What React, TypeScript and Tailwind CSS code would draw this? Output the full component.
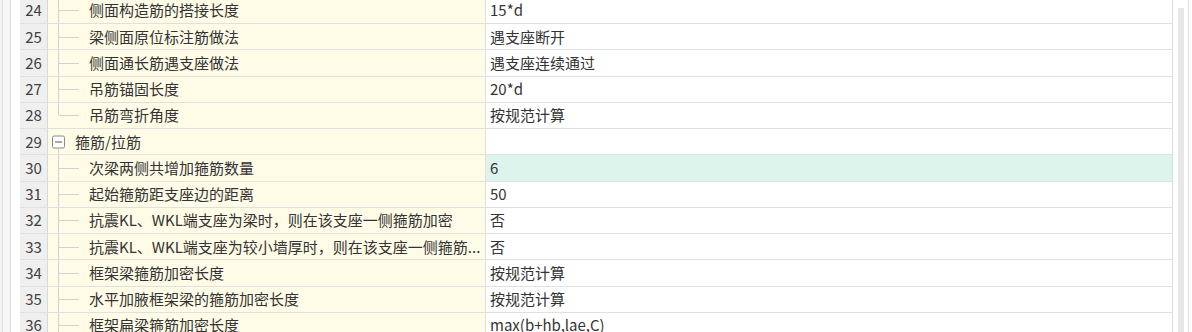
import React from 'react'

type Row = { no: number; name: string; value: string; group?: boolean; last?: boolean; active?: boolean }

const ROWS: Row[] = [
  { no: 24, name: '侧面构造筋的搭接长度', value: '15*d' },
  { no: 25, name: '梁侧面原位标注筋做法', value: '遇支座断开' },
  { no: 26, name: '侧面通长筋遇支座做法', value: '遇支座连续通过' },
  { no: 27, name: '吊筋锚固长度', value: '20*d' },
  { no: 28, name: '吊筋弯折角度', value: '按规范计算', last: true },
  { no: 29, name: '箍筋/拉筋', value: '', group: true },
  { no: 30, name: '次梁两侧共增加箍筋数量', value: '6', active: true },
  { no: 31, name: '起始箍筋距支座边的距离', value: '50' },
  { no: 32, name: '抗震KL、WKL端支座为梁时，则在该支座一侧箍筋加密', value: '否' },
  { no: 33, name: '抗震KL、WKL端支座为较小墙厚时，则在该支座一侧箍筋...', value: '否' },
  { no: 34, name: '框架梁箍筋加密长度', value: '按规范计算' },
  { no: 35, name: '水平加腋框架梁的箍筋加密长度', value: '按规范计算' },
  { no: 36, name: '框架扁梁箍筋加密长度', value: 'max(b+hb,lae,C)' },
]

function TreeCell({ row }: { row: Row }) {
  if (row.group) {
    return (
      <div className="flex h-full items-center min-w-0">
        <div className="relative h-full w-[22px] shrink-0">
          <div className="absolute left-[3px] top-1/2 -translate-y-1/2 w-[13px] h-[13px] border border-[#8a8a8a] rounded-[2px] bg-white flex items-center justify-center">
            <div className="w-[7px] h-px bg-[#555]" />
          </div>
          <div className="absolute left-[9px] top-[calc(50%+7px)] bottom-0 w-px bg-[#d2d2d2]" />
        </div>
        <span className="ml-[4px] whitespace-nowrap">{row.name}</span>
      </div>
    )
  }
  return (
    <div className="flex h-full items-center min-w-0">
      <div className="relative h-full w-[40px] shrink-0">
        <div className={`absolute left-[9px] top-0 w-px bg-[#d2d2d2] ${row.last ? 'h-1/2' : 'bottom-0'}`} />
        <div className="absolute left-[10px] top-1/2 w-[20px] h-px bg-[#d2d2d2]" />
      </div>
      <span className="whitespace-nowrap">{row.name}</span>
    </div>
  )
}

export default function App() {
  return (
    <div
      className="w-[1192px] h-[332px] overflow-hidden bg-white flex text-[15px] text-[#333]"
      style={{ fontFamily: '"Noto Sans CJK SC", "Microsoft YaHei", sans-serif' }}
    >
      <div className="w-[20px] shrink-0 flex">
        <div className="w-[3px] bg-[#f4f4f4] border-r border-[#e2e2e2]" />
        <div className="w-[8px] bg-[#f7f7f7] border-r border-[#dcdcdc]" />
        <div className="flex-1 bg-white" />
      </div>

      <div className="w-[1153px] shrink-0 -mt-[2.25px] border-r border-[#dcdcdc]">
        {ROWS.map(row => (
          <div key={row.no} className="flex h-[26.25px] border-b border-[#e0e0e0] leading-[20px]">
            <div className="w-[28px] shrink-0 bg-[#efefef] border-r border-[#d8d8d8] flex items-center justify-center text-[#404040]">
              {row.no}
            </div>
            <div className="w-[438px] shrink-0 bg-[#fefbe7] border-r border-[#e0e0e0] pl-[1px] overflow-hidden">
              <TreeCell row={row} />
            </div>
            <div className={`flex-1 flex items-center pl-[4px] ${row.active ? 'bg-[#dcf4eb]' : 'bg-white'}`}>
              {row.value}
            </div>
          </div>
        ))}
      </div>

      <div className="flex-1 flex bg-white">
        <div className="w-[5px]" />
        <div className="w-[6px] mt-[8px] bg-[#e8e8e8]" />
        <div className="w-[4px]" />
        <div className="w-px bg-[#e0e0e0]" />
      </div>
    </div>
  )
}
